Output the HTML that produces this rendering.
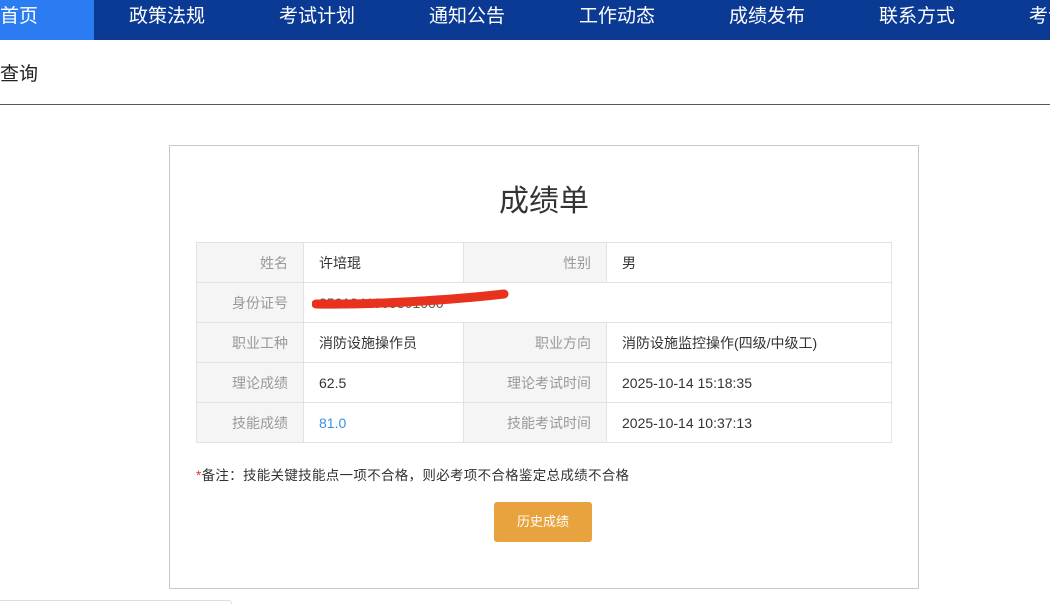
<!DOCTYPE html>
<html><head><meta charset="utf-8"><style>
*{margin:0;padding:0;box-sizing:border-box}
body{width:1050px;height:604px;overflow:hidden;background:#fff;font-family:"Liberation Sans","Noto Sans CJK SC",sans-serif;position:relative}
.nav{position:absolute;left:0;top:0;width:1050px;height:40px;background:#0b3a94}
.nav .act{position:absolute;left:0;top:0;width:94px;height:40px;background:#2b7cf3}
.nav span{position:absolute;top:6px;color:#fff;font-size:19px;line-height:22px;white-space:nowrap}
.q{position:absolute;left:0;top:59px;font-size:19px;color:#222}
.hr{position:absolute;left:0;top:104px;width:1050px;height:1px;background:#4e5d6c}
.card{position:absolute;left:169px;top:145px;width:750px;height:444px;border:1px solid #c8c8c8}
h1{position:absolute;left:0;width:748px;top:30px;text-align:center;font-weight:normal;font-size:30px;color:#333}
table{position:absolute;left:26px;top:96px;width:696px;border-collapse:collapse;font-size:14px}
td{border:1px solid #e2e2e2;height:40px;padding:0 15px;color:#333}
td.l{background:#f5f5f5;color:#999;text-align:right}
.note{position:absolute;left:26px;top:318px;font-size:13.5px;color:#333;letter-spacing:0.3px}
.btn{position:absolute;left:324px;top:356px;width:98px;height:40px;background:#e8a33e;border-radius:3px;color:#fff;font-size:13px;text-align:center;line-height:40px}
</style></head><body>
<div class="nav"><div class="act"></div>
<span style="left:0">首页</span><span style="left:129px">政策法规</span><span style="left:279px">考试计划</span><span style="left:429px">通知公告</span><span style="left:579px">工作动态</span><span style="left:729px">成绩发布</span><span style="left:879px">联系方式</span><span style="left:1029px">考试</span></div>
<div class="q">查询</div>
<div class="hr"></div>
<div class="card">
<h1>成绩单</h1>
<table>
<col style="width:107px"><col style="width:160px"><col style="width:143px"><col>
<tr><td class="l">姓名</td><td>许培琨</td><td class="l">性别</td><td>男</td></tr>
<tr><td class="l">身份证号</td><td colspan="3" style="position:relative"><span style="color:#555">3501341009501000</span><svg style="position:absolute;left:8px;top:4px" width="200" height="24"><path d="M4 17 C60 18 140 13 192 7" stroke="#e8321e" stroke-width="9" stroke-linecap="round" fill="none"/></svg></td></tr>
<tr><td class="l">职业工种</td><td>消防设施操作员</td><td class="l">职业方向</td><td>消防设施监控操作(四级/中级工)</td></tr>
<tr><td class="l">理论成绩</td><td>62.5</td><td class="l">理论考试时间</td><td>2025-10-14 15:18:35</td></tr>
<tr><td class="l">技能成绩</td><td style="color:#3a8ee6">81.0</td><td class="l">技能考试时间</td><td>2025-10-14 10:37:13</td></tr>
</table>
<div class="note"><span style="color:#e33">*</span>备注：技能关键技能点一项不合格，则必考项不合格鉴定总成绩不合格</div>
<div class="btn">历史成绩</div>
</div>
<div style="position:absolute;left:0;top:600px;width:232px;height:4px;border-top:1px solid #ddd;border-right:1px solid #ddd;border-radius:0 3px 0 0"></div>
</body></html>
